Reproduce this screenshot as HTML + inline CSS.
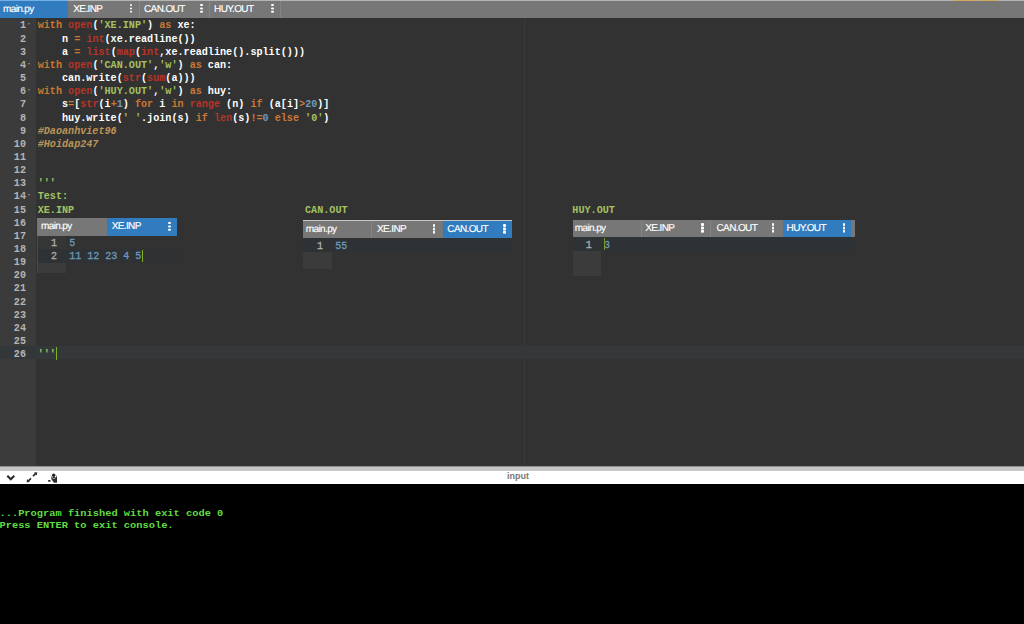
<!DOCTYPE html>
<html><head><meta charset="utf-8"><title>main.py</title>
<style>
html,body{margin:0;padding:0;}
body{width:1024px;height:624px;overflow:hidden;position:relative;background:#323232;font-family:"Liberation Sans",sans-serif;}
.abs{position:absolute;}
#topbar{left:0;top:0;width:1024px;height:18px;background:#777;}
#topline{left:0;top:0;width:1024px;height:1px;background:#b4b4b4;}
.tab{position:absolute;top:0;height:18px;color:#fff;font:10px/18px "Liberation Sans",sans-serif;letter-spacing:-0.62px;-webkit-text-stroke:0.15px #fff;text-rendering:geometricPrecision;white-space:nowrap;box-sizing:border-box;}
.tab.act{background:#317bbf;}
.tab span{position:absolute;top:0;}
.sep{position:absolute;top:1px;width:1px;height:17px;background:#858585;}
.dots{position:absolute;width:2.5px;height:2.4px;background:#fff;box-shadow:0 3.4px 0 #fff,0 6.8px 0 #fff;border-radius:1px;}
#editor{left:0;top:18px;width:1024px;height:448px;background:#323232;}
#gutter{left:0;top:18px;width:35.5px;height:448px;background:#3b3b3b;}
#pm{left:524px;top:18px;width:1px;height:448px;background:#3b3b3b;}
.code{font-family:"Liberation Mono",monospace;font-weight:bold;white-space:pre;color:#fff;}
.ln{position:absolute;left:0;width:26px;text-align:right;color:#b4b4b4;}
.cl{position:absolute;}
.k{color:#cc7833}.f{color:#b83426}.s{color:#a5c261}.n{color:#6c99bb}.c{color:#bc9458;font-style:italic}
.fold{position:absolute;width:0;height:0;border-left:1.8px solid transparent;border-right:1.8px solid transparent;border-top:2.2px solid #909090;}
.mini{font-family:"Liberation Mono",monospace;white-space:pre;-webkit-text-stroke:0.3px;}
.mln{position:absolute;color:#b0b0b0;text-align:right;}
.mtx{position:absolute;color:#6c99bb;}
#split1{left:0;top:466px;width:1024px;height:1px;background:#8f8f8f;}
#split2{left:0;top:467px;width:1024px;height:4px;background:#c6c6c6;}
#cbar{left:0;top:471px;width:1024px;height:13px;background:#fff;}
#console{left:0;top:484px;width:1024px;height:140px;background:#000;}
.con{position:absolute;left:0;font-family:"Liberation Mono",monospace;font-weight:bold;color:#60de40;white-space:pre;}
</style></head><body>
<div id="editor" class="abs"></div><div id="gutter" class="abs"></div><div id="pm" class="abs"></div>
<div class="abs" style="left:0;top:346.3px;width:1024px;height:13.2px;background:#35383a"></div>
<div class="abs" style="left:0;top:346.3px;width:35.5px;height:13.2px;background:#34373a"></div>
<div class="code ln" style="top:19.00px;font-size:10.14px;line-height:13px">1</div><div class="fold" style="left:28.3px;top:22.50px"></div><div class="code cl" style="left:37.7px;top:19.00px;font-size:10.14px;line-height:13px"><span class="k">with</span> <span class="f">open</span>(<span class="s">'XE.INP'</span>) <span class="k">as</span> xe:</div>
<div class="code ln" style="top:33.00px;font-size:10.14px;line-height:13px">2</div><div class="code cl" style="left:37.7px;top:33.00px;font-size:10.14px;line-height:13px">    n <span class="k">=</span> <span class="f">int</span>(xe.readline())</div>
<div class="code ln" style="top:46.00px;font-size:10.14px;line-height:13px">3</div><div class="code cl" style="left:37.7px;top:46.00px;font-size:10.14px;line-height:13px">    a <span class="k">=</span> <span class="f">list</span>(<span class="f">map</span>(<span class="f">int</span>,xe.readline().split()))</div>
<div class="code ln" style="top:59.00px;font-size:10.14px;line-height:13px">4</div><div class="fold" style="left:28.3px;top:62.50px"></div><div class="code cl" style="left:37.7px;top:59.00px;font-size:10.14px;line-height:13px"><span class="k">with</span> <span class="f">open</span>(<span class="s">'CAN.OUT'</span>,<span class="s">'w'</span>) <span class="k">as</span> can:</div>
<div class="code ln" style="top:72.00px;font-size:10.14px;line-height:13px">5</div><div class="code cl" style="left:37.7px;top:72.00px;font-size:10.14px;line-height:13px">    can.write(<span class="f">str</span>(<span class="f">sum</span>(a)))</div>
<div class="code ln" style="top:85.00px;font-size:10.14px;line-height:13px">6</div><div class="fold" style="left:28.3px;top:88.50px"></div><div class="code cl" style="left:37.7px;top:85.00px;font-size:10.14px;line-height:13px"><span class="k">with</span> <span class="f">open</span>(<span class="s">'HUY.OUT'</span>,<span class="s">'w'</span>) <span class="k">as</span> huy:</div>
<div class="code ln" style="top:98.00px;font-size:10.14px;line-height:13px">7</div><div class="code cl" style="left:37.7px;top:98.00px;font-size:10.14px;line-height:13px">    s<span class="k">=</span>[<span class="f">str</span>(i<span class="k">+</span><span class="n">1</span>) <span class="k">for</span> i <span class="k">in</span> <span class="f">range</span> (n) <span class="k">if</span> (a[i]<span class="k">&gt;</span><span class="n">20</span>)]</div>
<div class="code ln" style="top:112.00px;font-size:10.14px;line-height:13px">8</div><div class="code cl" style="left:37.7px;top:112.00px;font-size:10.14px;line-height:13px">    huy.write(<span class="s">' '</span>.join(s) <span class="k">if</span> <span class="f">len</span>(s)<span class="k">!=</span><span class="n">0</span> <span class="k">else</span> <span class="s">'0'</span>)</div>
<div class="code ln" style="top:125.00px;font-size:10.14px;line-height:13px">9</div><div class="code cl" style="left:37.7px;top:125.00px;font-size:10.14px;line-height:13px"><span class="c">#Daoanhviet96</span></div>
<div class="code ln" style="top:138.00px;font-size:10.14px;line-height:13px">10</div><div class="code cl" style="left:37.7px;top:138.00px;font-size:10.14px;line-height:13px"><span class="c">#Hoidap247</span></div>
<div class="code ln" style="top:151.00px;font-size:10.14px;line-height:13px">11</div>
<div class="code ln" style="top:164.00px;font-size:10.14px;line-height:13px">12</div>
<div class="code ln" style="top:177.00px;font-size:10.14px;line-height:13px">13</div><div class="code cl" style="left:37.7px;top:177.00px;font-size:10.14px;line-height:13px"><span class="s">'''</span></div>
<div class="code ln" style="top:190.00px;font-size:10.14px;line-height:13px">14</div><div class="fold" style="left:28.3px;top:193.50px"></div><div class="code cl" style="left:37.7px;top:190.00px;font-size:10.14px;line-height:13px"><span class="s">Test:</span></div>
<div class="code ln" style="top:204.00px;font-size:10.14px;line-height:13px">15</div><div class="code cl" style="left:37.7px;top:204.00px;font-size:10.14px;line-height:13px"><span class="s">XE.INP                                      CAN.OUT                                     HUY.OUT</span></div>
<div class="code ln" style="top:217.00px;font-size:10.14px;line-height:13px">16</div>
<div class="code ln" style="top:230.00px;font-size:10.14px;line-height:13px">17</div>
<div class="code ln" style="top:243.00px;font-size:10.14px;line-height:13px">18</div>
<div class="code ln" style="top:256.00px;font-size:10.14px;line-height:13px">19</div>
<div class="code ln" style="top:269.00px;font-size:10.14px;line-height:13px">20</div>
<div class="code ln" style="top:282.00px;font-size:10.14px;line-height:13px">21</div>
<div class="code ln" style="top:296.00px;font-size:10.14px;line-height:13px">22</div>
<div class="code ln" style="top:309.00px;font-size:10.14px;line-height:13px">23</div>
<div class="code ln" style="top:322.00px;font-size:10.14px;line-height:13px">24</div>
<div class="code ln" style="top:335.00px;font-size:10.14px;line-height:13px">25</div>
<div class="code ln" style="top:348.00px;font-size:10.14px;line-height:13px">26</div><div class="code cl" style="left:37.7px;top:348.00px;font-size:10.14px;line-height:13px"><span class="s">'''</span></div>
<div class="abs" style="left:56px;top:346.5px;width:1px;height:13px;background:#7fb022"></div>
<div id="topbar" class="abs"></div><div id="topline" class="abs"></div>
<div class="tab act" style="left:0px;top:0px;width:68px;height:18px;line-height:18px"><span style="left:3px;top:3.70px;line-height:12px">main.py</span></div><div class="tab" style="left:68px;top:0px;width:70.5px;height:18px;line-height:18px"><span style="left:5.3px;top:3.70px;line-height:12px">XE.INP</span><div class="dots" style="left:61.75px;top:4.10px"></div></div><div class="tab" style="left:138.5px;top:0px;width:70.5px;height:18px;line-height:18px"><span style="left:5.5px;top:3.70px;line-height:12px">CAN.OUT</span><div class="dots" style="left:61.75px;top:4.10px"></div></div><div class="tab" style="left:209px;top:0px;width:71px;height:18px;line-height:18px"><span style="left:5.1px;top:3.70px;line-height:12px">HUY.OUT</span><div class="dots" style="left:62.25px;top:4.10px"></div></div><div class="sep" style="left:138.5px"></div><div class="sep" style="left:209px"></div><div class="sep" style="left:280px"></div><div class="abs" style="left:0;top:0;width:68px;height:1px;background:#74b0e6"></div><div class="abs" style="left:954px;top:0;width:21px;height:1px;background:#d2a660"></div><div class="abs" style="left:977px;top:0;width:21px;height:1px;background:#d2a660"></div>
<div class="abs" style="left:37px;top:218px;width:140px;height:17.5px;background:#777"></div><div class="tab" style="left:37px;top:218px;width:70.3px;height:17.5px;line-height:17.5px"><span style="left:4px;top:2.70px;line-height:12px">main.py</span></div><div class="tab act" style="left:107.3px;top:218px;width:69.7px;height:17.5px;line-height:17.5px"><span style="left:4.4px;top:2.70px;line-height:12px">XE.INP</span><div class="dots" style="left:60.95px;top:3.85px"></div></div><div class="abs" style="left:37px;top:235.5px;width:28.7px;height:37.5px;background:#3b3b3b"></div><div class="abs" style="left:37px;top:235.5px;width:28.7px;height:26.3px;background:#353636"></div><div class="abs" style="left:37px;top:248.65px;width:140px;height:14px;background:#2f3235"></div><div class="abs" style="left:36.5px;top:235.5px;width:1.6px;height:37.5px;background:#2f5070"></div><div class="mini mln" style="left:37px;width:20px;top:237.20px;font-size:10px;line-height:13.15px">1</div><div class="mini mtx" style="left:69.3px;top:237.20px;font-size:10px;line-height:13.15px">5</div><div class="mini mln" style="left:37px;width:20px;top:250.35px;font-size:10px;line-height:13.15px">2</div><div class="mini mtx" style="left:69.3px;top:250.35px;font-size:10px;line-height:13.15px">11 12 23 4 5</div>
<div class="abs" style="left:142px;top:249.5px;width:1px;height:12.5px;background:#7fb022"></div>
<div class="abs" style="left:303px;top:220.3px;width:208.8px;height:18px;background:#777"></div><div class="tab" style="left:303px;top:220.3px;width:68px;height:18px;line-height:18px"><span style="left:2.8px;top:3.40px;line-height:12px">main.py</span></div><div class="tab" style="left:371px;top:220.3px;width:71.8px;height:18px;line-height:18px"><span style="left:6px;top:3.40px;line-height:12px">XE.INP</span><div class="dots" style="left:61.85px;top:4.10px"></div></div><div class="sep" style="left:371px;top:221.3px;height:17px"></div><div class="tab act" style="left:442.8px;top:220.3px;width:69px;height:18px;line-height:18px"><span style="left:4.5px;top:3.40px;line-height:12px">CAN.OUT</span><div class="dots" style="left:60.65px;top:4.10px"></div></div><div class="abs" style="left:303px;top:238.3px;width:28.7px;height:30.5px;background:#3b3b3b"></div><div class="abs" style="left:303px;top:238.3px;width:28.7px;height:13.2px;background:#353636"></div><div class="abs" style="left:303px;top:238.30px;width:208.8px;height:14px;background:#2f3235"></div><div class="mini mln" style="left:303px;width:20px;top:240.00px;font-size:10px;line-height:13.15px">1</div><div class="mini mtx" style="left:335.3px;top:240.00px;font-size:10px;line-height:13.15px">55</div>
<div class="abs" style="left:303px;top:220.3px;width:208.8px;height:1px;background:#c9c9c9"></div>
<div class="abs" style="left:572.8px;top:219.7px;width:282.7px;height:17.3px;background:#777"></div><div class="tab" style="left:572.8px;top:219.7px;width:68.2px;height:17.3px;line-height:17.3px"><span style="left:2.0px;top:3.00px;line-height:12px">main.py</span></div><div class="tab" style="left:641.0px;top:219.7px;width:69.3px;height:17.3px;line-height:17.3px"><span style="left:4.3px;top:3.00px;line-height:12px">XE.INP</span><div class="dots" style="left:60.25px;top:3.75px"></div></div><div class="sep" style="left:641.0px;top:220.7px;height:16.3px"></div><div class="tab" style="left:710.3px;top:219.7px;width:72.2px;height:17.3px;line-height:17.3px"><span style="left:6.2px;top:3.00px;line-height:12px">CAN.OUT</span><div class="dots" style="left:61.45px;top:3.75px"></div></div><div class="sep" style="left:710.3px;top:220.7px;height:16.3px"></div><div class="tab act" style="left:782.5px;top:219.7px;width:68.8px;height:17.3px;line-height:17.3px"><span style="left:4.1px;top:3.00px;line-height:12px">HUY.OUT</span><div class="dots" style="left:60.05px;top:3.75px"></div></div><div class="abs" style="left:572.8px;top:237.0px;width:28.7px;height:38.6px;background:#3b3b3b"></div><div class="abs" style="left:572.8px;top:237.0px;width:28.7px;height:13.2px;background:#353636"></div><div class="abs" style="left:572.8px;top:237.00px;width:282.7px;height:14px;background:#2f3235"></div><div class="mini mln" style="left:571.8px;width:20px;top:238.70px;font-size:10px;line-height:13.15px">1</div><div class="mini mtx" style="left:604.0999999999999px;top:238.70px;font-size:10px;line-height:13.15px">3</div>
<div class="abs" style="left:603.6px;top:237.5px;width:1px;height:12.5px;background:#6f9a22"></div>
<div id="split1" class="abs"></div><div id="split2" class="abs"></div><div id="cbar" class="abs"></div><div id="console" class="abs"></div>
<div class="abs" style="left:507px;top:470.2px;width:22px;height:13px;font:bold 9px/12px 'Liberation Sans',sans-serif;color:#777;white-space:nowrap">input</div>
<svg class="abs" style="left:0;top:471px" width="64" height="13" viewBox="0 471 64 13">
<path d="M7.3 475.7 L10.8 479.3 L14.3 475.7" fill="none" stroke="#2a2a2a" stroke-width="2"/>
<path d="M33 476.2 L35.6 473.6 M31 478.4 L28.3 481" stroke="#2a2a2a" stroke-width="1.7" fill="none"/>
<path d="M34 472.5 L37.2 472.2 L36.9 475.4 Z M27 478.9 L26.7 482.2 L30 481.9 Z" fill="#2a2a2a"/>
<path d="M50.6 475 L51.6 479.6 L54 482.8 H57 V475 L56.2 477 H51.6 Z" fill="#2c2c2c"/>
<circle cx="53.7" cy="475.3" r="1.7" fill="#222"/>
<path d="M51.9 477.3 A2 2 0 0 0 55.6 477.3" stroke="#ddd" stroke-width="0.8" fill="none"/>
<rect x="48" y="480" width="2.7" height="1.7" rx="0.6" fill="#333"/>
</svg>
<div class="con" style="top:507.2px;left:-0.5px;font-size:10.37px;line-height:12px;transform:scaleY(0.84);transform-origin:0 50%">...Program finished with exit code 0</div>
<div class="con" style="top:519.2px;left:-0.5px;font-size:10.37px;line-height:12px;transform:scaleY(0.84);transform-origin:0 50%">Press ENTER to exit console.</div>
</body></html>
